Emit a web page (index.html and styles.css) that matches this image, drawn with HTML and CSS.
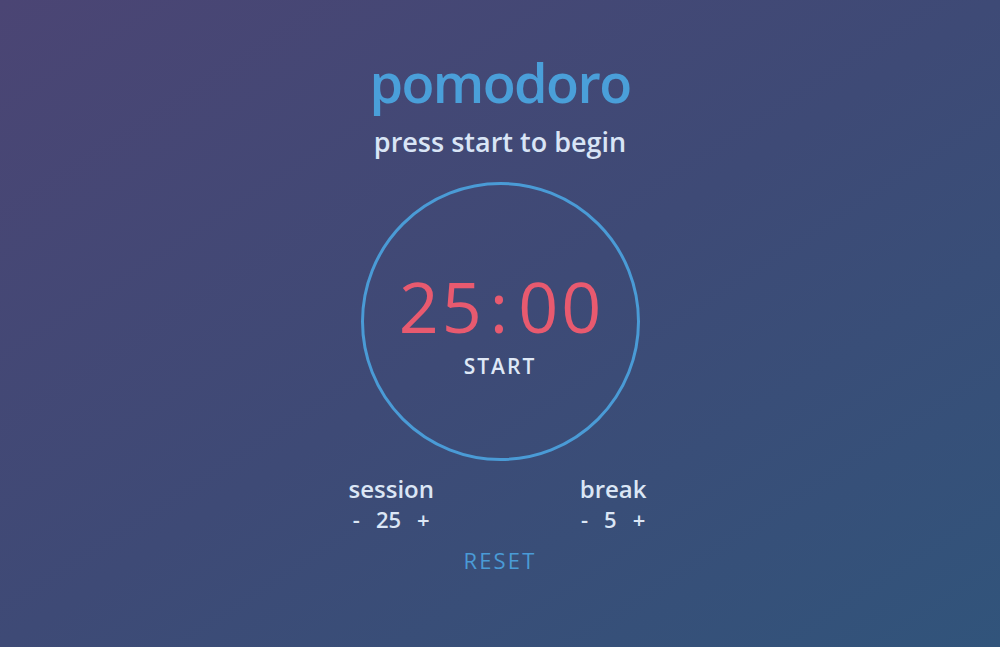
FILE: index.html
```html
<!DOCTYPE html>
<html lang="en">
<head>
<meta charset="utf-8">
<title>pomodoro</title>
<link rel="stylesheet" href="styles.css">
</head>
<body>
<main class="app">
  <h1 class="title">pomodoro</h1>
  <p class="status">press start to begin</p>
  <div class="clock">
    <div class="time">25<span class="colon">:</span>00</div>
    <button class="start">START</button>
  </div>
  <div class="settings">
    <div class="setting">
      <div class="label">session</div>
      <div class="adjust"><button class="btn">-</button><span class="value">25</span><button class="btn">+</button></div>
    </div>
    <div class="setting">
      <div class="label">break</div>
      <div class="adjust"><button class="btn">-</button><span class="value">5</span><button class="btn">+</button></div>
    </div>
  </div>
  <button class="reset">RESET</button>
</main>
</body>
</html>
```
FILE: styles.css
```css
html, body {
  margin: 0;
  height: 100%;
}
body {
  background: linear-gradient(to bottom right, #4b4574 0%, #3e4a76 50%, #31547b 100%);
  font-family: "Open Sans", "Noto Sans", sans-serif;
  color: #dbe6f5;
}
.app {
  display: flex;
  flex-direction: column;
  align-items: center;
  padding-top: 50px;
}
.title {
  margin: 0;
  font-size: 54px;
  line-height: 64px;
  font-weight: 600;
  color: #4a9fd9;
  letter-spacing: -1.6px;
}
.status {
  margin: 12px 0 0;
  font-size: 27px;
  line-height: 32px;
  font-weight: 600;
  color: #d9e5f6;
}
.clock {
  box-sizing: border-box;
  width: 279px;
  height: 279px;
  margin-top: 24px;
  padding-top: 85px;
  border: 3px solid #4a9bd6;
  border-radius: 50%;
  display: flex;
  flex-direction: column;
  align-items: center;
}
.time {
  font-size: 70px;
  line-height: 72px;
  font-weight: 400;
  color: #e85a6f;
  letter-spacing: 3px;
  margin-left: 3px;
}
.colon {
  margin: 0 7px 0 5px;
}
.start, .btn, .reset {
  background: none;
  border: none;
  padding: 0;
  font-family: inherit;
  cursor: pointer;
}
.start {
  margin-top: 10px;
  font-size: 21px;
  line-height: 28px;
  font-weight: 600;
  letter-spacing: 2px;
  color: #dfe8f6;
}
.settings {
  width: 298px;
  margin-left: -5px;
  display: flex;
  justify-content: space-between;
  margin-top: 13px;
}
.setting {
  display: flex;
  flex-direction: column;
  align-items: center;
}
.label {
  font-size: 24px;
  line-height: 30px;
  font-weight: 600;
}
.adjust {
  display: flex;
  align-items: center;
  gap: 16px;
  line-height: 30px;
}
.btn {
  font-size: 22px;
  font-weight: 600;
  color: #dbe6f5;
}
.value {
  font-size: 22px;
  font-weight: 600;
}
.reset {
  margin-top: 11px;
  font-size: 22px;
  line-height: 30px;
  font-weight: 500;
  letter-spacing: 2.2px;
  color: #4a9bd6;
}
```
